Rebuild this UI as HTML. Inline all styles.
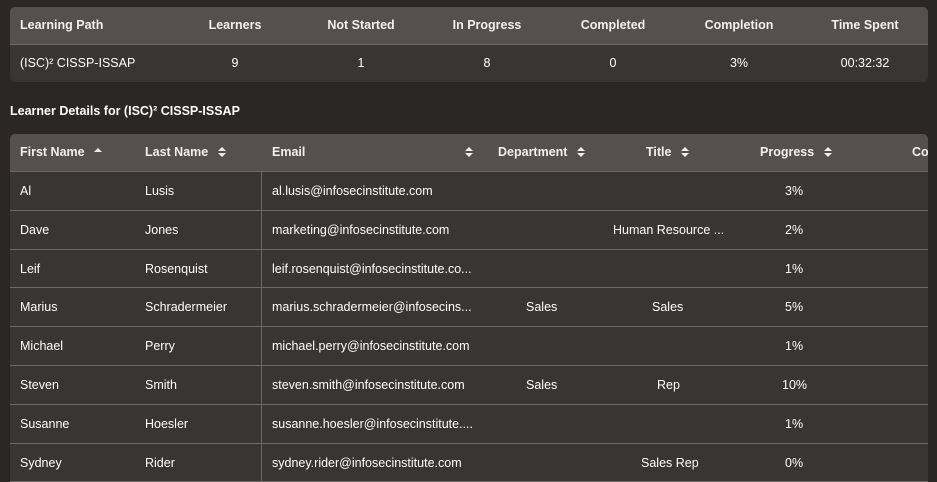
<!DOCTYPE html>
<html><head><style>
html,body{margin:0;width:937px;height:482px;overflow:hidden}
body{background:#2b2726;font-family:"Liberation Sans",sans-serif;font-size:12.5px;color:#fff;position:relative}
.t1{position:absolute;left:10px;top:7px;width:918px;height:75px;background:#393534;border-radius:5px;overflow:hidden}
.row{position:absolute;left:0;width:100%;}
.h{background:#55504d;font-weight:bold;color:#f2f0ef}
.c{position:absolute;top:0;white-space:nowrap}
.m{position:absolute;transform:translateX(-50%)}
.t2{position:absolute;left:10px;top:134px;width:918px;height:348px;background:#393534;border-radius:5px 5px 0 0;overflow:hidden}
.line{border-bottom:1px solid #6e6966}
svg.s{vertical-align:-1px;margin-left:6px}
.r{position:relative;height:38.8px;line-height:38px;border-bottom:1px solid #6e6966;box-sizing:border-box}
</style></head><body>
<div class="t1">
 <div class="row h line" style="top:0;height:37px;line-height:37px">
  <span class="c" style="left:10px">Learning Path</span>
  <span class="c" style="left:225px"><span class="m">Learners</span></span>
  <span class="c" style="left:351px"><span class="m">Not Started</span></span>
  <span class="c" style="left:477px"><span class="m">In Progress</span></span>
  <span class="c" style="left:603px"><span class="m">Completed</span></span>
  <span class="c" style="left:729px"><span class="m">Completion</span></span>
  <span class="c" style="left:855px"><span class="m">Time Spent</span></span>
 </div>
 <div class="row" style="top:38px;height:37px;line-height:37px">
  <span class="c" style="left:10px">(ISC)² CISSP-ISSAP</span>
  <span class="c" style="left:225px"><span class="m">9</span></span>
  <span class="c" style="left:351px"><span class="m">1</span></span>
  <span class="c" style="left:477px"><span class="m">8</span></span>
  <span class="c" style="left:603px"><span class="m">0</span></span>
  <span class="c" style="left:729px"><span class="m">3%</span></span>
  <span class="c" style="left:855px"><span class="m">00:32:32</span></span>
 </div>
</div>
<div style="position:absolute;left:10px;top:104px;font-weight:bold">Learner Details for (ISC)² CISSP-ISSAP</div>
<div class="t2">
 <div style="position:absolute;left:251px;top:0;height:100%;border-left:1px solid #6e6966"></div>
 <div class="row h line" style="top:0;height:37px;line-height:37px">
  <span class="c" style="left:10px">First Name <svg class="s" width="8" height="10" viewBox="0 0 8 10"><path d="M0 5L4 1L8 5Z" fill="#f2f0ef"/></svg></span>
  <span class="c" style="left:135px">Last Name <svg class="s" width="8" height="10" viewBox="0 0 8 10"><path d="M0 4L4 0L8 4ZM0 6L4 10L8 6Z" fill="#f2f0ef"/></svg></span>
  <span class="c" style="left:262px">Email</span>
  <span class="c" style="left:449px"><svg class="s" width="8" height="10" viewBox="0 0 8 10"><path d="M0 4L4 0L8 4ZM0 6L4 10L8 6Z" fill="#f2f0ef"/></svg></span>
  <span class="c" style="left:488px">Department <svg class="s" width="8" height="10" viewBox="0 0 8 10"><path d="M0 4L4 0L8 4ZM0 6L4 10L8 6Z" fill="#f2f0ef"/></svg></span>
  <span class="c" style="left:636px">Title <svg class="s" width="8" height="10" viewBox="0 0 8 10"><path d="M0 4L4 0L8 4ZM0 6L4 10L8 6Z" fill="#f2f0ef"/></svg></span>
  <span class="c" style="left:750px">Progress <svg class="s" width="8" height="10" viewBox="0 0 8 10"><path d="M0 4L4 0L8 4ZM0 6L4 10L8 6Z" fill="#f2f0ef"/></svg></span>
  <span class="c" style="left:902px">Co</span>
 </div>
</div>
<div style="position:absolute;left:10px;top:172px;width:918px">
 <div class="r"><span class="c" style="left:10px">Al</span><span class="c" style="left:135px">Lusis</span><span class="c" style="left:262px">al.lusis@infosecinstitute.com</span><span class="c" style="left:775px">3%</span></div>
 <div class="r"><span class="c" style="left:10px">Dave</span><span class="c" style="left:135px">Jones</span><span class="c" style="left:262px">marketing@infosecinstitute.com</span><span class="c" style="left:603px">Human Resource ...</span><span class="c" style="left:775px">2%</span></div>
 <div class="r"><span class="c" style="left:10px">Leif</span><span class="c" style="left:135px">Rosenquist</span><span class="c" style="left:262px">leif.rosenquist@infosecinstitute.co...</span><span class="c" style="left:775px">1%</span></div>
 <div class="r"><span class="c" style="left:10px">Marius</span><span class="c" style="left:135px">Schradermeier</span><span class="c" style="left:262px">marius.schradermeier@infosecins...</span><span class="c" style="left:516px">Sales</span><span class="c" style="left:642px">Sales</span><span class="c" style="left:775px">5%</span></div>
 <div class="r"><span class="c" style="left:10px">Michael</span><span class="c" style="left:135px">Perry</span><span class="c" style="left:262px">michael.perry@infosecinstitute.com</span><span class="c" style="left:775px">1%</span></div>
 <div class="r"><span class="c" style="left:10px">Steven</span><span class="c" style="left:135px">Smith</span><span class="c" style="left:262px">steven.smith@infosecinstitute.com</span><span class="c" style="left:516px">Sales</span><span class="c" style="left:647px">Rep</span><span class="c" style="left:772px">10%</span></div>
 <div class="r"><span class="c" style="left:10px">Susanne</span><span class="c" style="left:135px">Hoesler</span><span class="c" style="left:262px">susanne.hoesler@infosecinstitute....</span><span class="c" style="left:775px">1%</span></div>
 <div class="r"><span class="c" style="left:10px">Sydney</span><span class="c" style="left:135px">Rider</span><span class="c" style="left:262px">sydney.rider@infosecinstitute.com</span><span class="c" style="left:631px">Sales Rep</span><span class="c" style="left:775px">0%</span></div>
</div>
</body></html>
